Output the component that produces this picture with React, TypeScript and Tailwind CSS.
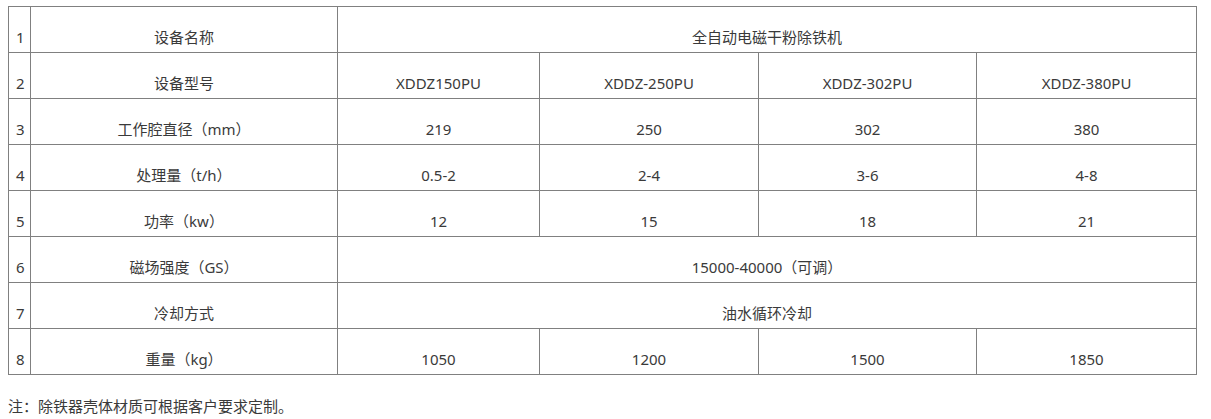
import React from "react";

const cell = "border border-[#808080] align-bottom pb-[5px] leading-[20px] h-[46px] text-center";

const rows: (string | { t: string; span?: number })[][] = [
  ["1", "设备名称", { t: "全自动电磁干粉除铁机", span: 4 }],
  ["2", "设备型号", "XDDZ150PU", "XDDZ-250PU", "XDDZ-302PU", "XDDZ-380PU"],
  ["3", "工作腔直径（mm）", "219", "250", "302", "380"],
  ["4", "处理量（t/h）", "0.5-2", "2-4", "3-6", "4-8"],
  ["5", "功率（kw）", "12", "15", "18", "21"],
  ["6", "磁场强度（GS）", { t: "15000-40000（可调）", span: 4 }],
  ["7", "冷却方式", { t: "油水循环冷却", span: 4 }],
  ["8", "重量（kg）", "1050", "1200", "1500", "1850"],
];

export default function App() {
  return (
    <div
      className="bg-white w-[1211px] h-[419px] pt-[6px] pl-[8px] text-[15px] text-[#3a3a3a]"
      style={{ fontFamily: '"Noto Sans", "Noto Sans CJK SC", sans-serif' }}
    >
      <table className="border-collapse table-fixed w-[1188px]">
        <colgroup>
          <col className="w-[22px]" />
          <col className="w-[307px]" />
          <col className="w-[202px]" />
          <col className="w-[219px]" />
          <col className="w-[218px]" />
          <col className="w-[220px]" />
        </colgroup>
        <tbody>
          {rows.map((r, i) => (
            <tr key={i}>
              {r.map((c, j) => {
                const isObj = typeof c === "object";
                const text = isObj ? c.t : c;
                const span = isObj ? c.span : undefined;
                return (
                  <td
                    key={j}
                    colSpan={span}
                    className={j === 0 ? `${cell} !text-left pl-[7px]` : cell}
                  >
                    {text}
                  </td>
                );
              })}
            </tr>
          ))}
        </tbody>
      </table>
      <p className="mt-[21px] leading-[20px]">注：除铁器壳体材质可根据客户要求定制。</p>
    </div>
  );
}
